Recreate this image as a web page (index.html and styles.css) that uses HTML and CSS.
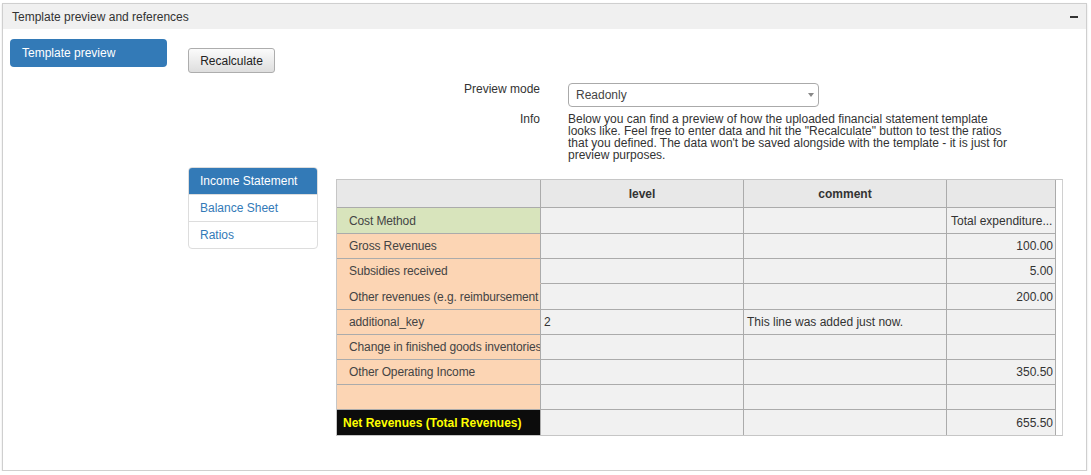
FILE: index.html
```html
<!DOCTYPE html>
<html>
<head>
<meta charset="utf-8">
<link rel="stylesheet" href="styles.css">
</head>
<body>
<div class="panel">
  <div class="panel-head">
    <span class="panel-title">Template preview and references</span>
    <span class="collapse-icon"></span>
  </div>
  <div class="panel-body">
    <div class="side-nav">
      <div class="pill active">Template preview</div>
    </div>
    <div class="main">
      <button class="btn">Recalculate</button>
      <div class="form">
        <div class="label">Preview mode</div>
        <div class="select"><span>Readonly</span><span class="caret"></span></div>
        <div class="label">Info</div>
        <div class="info">Below you can find a preview of how the uploaded financial statement template looks like. Feel free to enter data and hit the "Recalculate" button to test the ratios that you defined. The data won't be saved alongside with the template - it is just for preview purposes.</div>
      </div>
      <div class="sheet-area">
        <ul class="tabs">
          <li class="tab active">Income Statement</li>
          <li class="tab">Balance Sheet</li>
          <li class="tab">Ratios</li>
        </ul>
        <div class="grid-wrap">
          <table class="grid">
            <colgroup>
              <col class="c1"><col class="c2"><col class="c3"><col class="c4">
            </colgroup>
            <thead>
              <tr><th></th><th>level</th><th>comment</th><th></th></tr>
            </thead>
            <tbody>
              <tr class="r-tall"><td class="key green">Cost Method</td><td></td><td></td><td class="txt">Total expenditure...</td></tr>
              <tr><td class="key peach">Gross Revenues</td><td></td><td></td><td class="num">100.00</td></tr>
              <tr><td class="key peach nob">Subsidies received</td><td></td><td></td><td class="num">5.00</td></tr>
              <tr class="r-tall"><td class="key peach">Other revenues (e.g. reimbursement</td><td></td><td></td><td class="num">200.00</td></tr>
              <tr><td class="key peach">additional_key</td><td class="txt">2</td><td class="txt">This line was added just now.</td><td></td></tr>
              <tr><td class="key peach">Change in finished goods inventories</td><td></td><td></td><td></td></tr>
              <tr><td class="key peach">Other Operating Income</td><td></td><td></td><td class="num">350.50</td></tr>
              <tr><td class="key peach"></td><td></td><td></td><td></td></tr>
              <tr class="last"><td class="key total">Net Revenues (Total Revenues)</td><td></td><td></td><td class="num">655.50</td></tr>
            </tbody>
          </table>
        </div>
      </div>
    </div>
  </div>
</div>
</body>
</html>
```
FILE: styles.css
```css
* { box-sizing: border-box; }
html, body { margin: 0; padding: 0; background: #fff; }
body {
  font-family: "Liberation Sans", Arial, sans-serif;
  font-size: 12px;
  color: #333;
  padding: 3px 4px 0 2px;
}
.panel {
  border: 1px solid #cfcfcf;
  box-shadow: 0 1px 2px rgba(0,0,0,0.12);
  height: 468px;
  display: flex;
  flex-direction: column;
}
.panel-head {
  height: 25px;
  background: #f0f0f0;
  display: flex;
  align-items: center;
  justify-content: space-between;
  padding: 0 8px 0 9px;
}
.panel-title { font-size: 12px; color: #333; }
.collapse-icon {
  width: 8px;
  height: 2px;
  background: #333;
  margin-top: 1px;
}
.panel-body {
  display: flex;
  padding: 10px 7px 0 7px;
  gap: 21px;
}
.side-nav { width: 157px; flex: none; }
.pill {
  height: 28px;
  border-radius: 4px;
  padding: 0 12px;
  display: flex;
  align-items: center;
  padding-bottom: 1px;
}
.pill.active { background: #337ab7; color: #fff; }
.main { flex: 1; padding-top: 9px; }
.btn {
  font-family: "Liberation Sans", Arial, sans-serif;
  font-size: 12px;
  color: #222;
  width: 87px;
  height: 25px;
  border: 1px solid #adadad;
  border-radius: 3px;
  background: linear-gradient(#fbfbfb, #dedede);
  padding: 0;
  display: block;
}
.form {
  display: grid;
  grid-template-columns: 352px 251px;
  column-gap: 28px;
  row-gap: 6px;
  margin-top: 10px;
}
.label {
  text-align: right;
  line-height: 12px;
  color: #333;
}
.select {
  height: 24px;
  border: 1px solid #aaa;
  border-radius: 4px;
  display: flex;
  align-items: center;
  justify-content: space-between;
  padding: 0 4px 0 7px;
  color: #444;
}
.caret {
  width: 0;
  height: 0;
  border-style: solid;
  border-width: 4px 3px 0 3px;
  border-color: #888 transparent transparent transparent;
}
.info {
  width: 445px;
  line-height: 12px;
  color: #333;
}
.sheet-area {
  display: flex;
  gap: 18px;
  margin-top: 6px;
}
.tabs {
  list-style: none;
  margin: 0;
  padding: 0;
  width: 130px;
  flex: none;
  border: 1px solid #ddd;
  border-radius: 4px;
  align-self: flex-start;
  overflow: hidden;
}
.tab {
  height: 27px;
  padding: 0 11px;
  display: flex;
  align-items: center;
  color: #337ab7;
  border-top: 1px solid #ddd;
}
.tab:first-child { border-top: 0; height: 26px; }
.tab.active { background: #337ab7; color: #fff; }
.grid-wrap {
  margin-top: 12px;
  width: 727px;
  border: 1px solid #c6c6c6;
  border-right-color: #d0d0d0;
}
.grid {
  border-collapse: separate;
  border-spacing: 0;
  table-layout: fixed;
  width: 719px;
}
col.c1 { width: 204px; }
col.c2 { width: 203px; }
col.c3 { width: 203px; }
col.c4 { width: 109px; }
.grid th, .grid td {
  border-right: 1px solid #ababab;
  border-bottom: 1px solid #ababab;
  background: #f1f1f1;
  white-space: nowrap;
  overflow: hidden;
  padding: 0 3px;
  font-size: 12px;
  color: #333;
}
.grid th {
  height: 28px;
  background: #e8e8e8;
  font-weight: bold;
  text-align: center;
  color: #333;
}
.grid td { height: 25px; }
.grid tr.r-tall td { height: 26px; }
.grid tr.last td { border-bottom: 0; height: 25px; }
.grid td.key { padding-left: 12px; padding-right: 0; color: #444; letter-spacing: -0.12px; }
.grid td.green { background: #d8e4bc; }
.grid td.peach { background: #fcd5b4; }
.grid td.peach.nob { border-bottom-color: #fcd5b4; }
.grid td.total {
  background: #0c0c0c;
  color: #ffff00;
  font-weight: bold;
  padding-left: 6px;
  letter-spacing: 0;
}
.grid td.num { text-align: right; padding-right: 2px; }
.grid td.txt { padding-left: 3px; }
.grid td.txt:last-child { padding-left: 4px; }
```
